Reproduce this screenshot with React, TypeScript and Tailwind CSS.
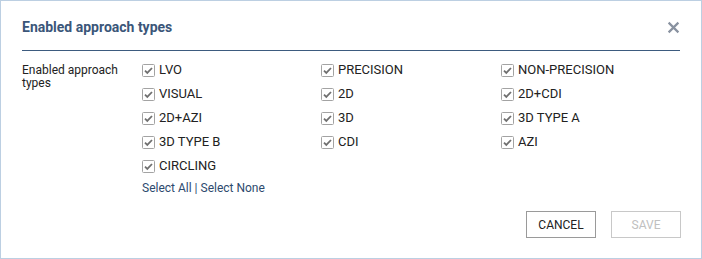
import React from 'react';

const TYPES = [
    'LVO', 'PRECISION', 'NON-PRECISION',
    'VISUAL', '2D', '2D+CDI',
    '2D+AZI', '3D', '3D TYPE A',
    '3D TYPE B', 'CDI', 'AZI',
    'CIRCLING',
];

const CheckBox: React.FC = () => (
    <svg width="13" height="13" viewBox="0 0 13 13" className="shrink-0">
        <rect x="0.5" y="0.5" width="12" height="12" rx="1" fill="#fff" stroke="#a3a3a3" />
        <path d="M3 6.6 L5.3 8.9 L10 4" fill="none" stroke="#707070" strokeWidth="1.8" />
    </svg>
);

export default function App() {
    return (
        <div
            className="w-[702px] h-[259px] bg-white border border-[#bccfe2] flex flex-col text-[#222]"
            style={{ fontFamily: 'Roboto, "Liberation Sans", sans-serif' }}
        >
            <div className="mx-[21px] pt-[16px] pb-[13px] flex items-center justify-between border-b-[1.5px] border-[#3d5b7f]">
                <h2 className="text-[14px] font-bold text-[#3b5679] leading-[20px]">Enabled approach types</h2>
                <svg width="13" height="13" viewBox="0 0 12 12">
                    <path d="M1.5 1.5 L10.5 10.5 M10.5 1.5 L1.5 10.5" stroke="#8992a0" strokeWidth="2" />
                </svg>
            </div>

            <div className="flex pl-[21px] pt-[7px]">
                <div className="w-[120px] shrink-0 text-[12px] leading-[13px] text-[#222] pt-[6px]">
                    Enabled approach
                    <br />
                    types
                </div>
                <div>
                    <div className="grid grid-cols-[179px_180px_180px]">
                        {TYPES.map((t) => (
                            <label key={t} className="flex items-center gap-[4px] h-[24px] text-[13px]">
                                <CheckBox />
                                <span>{t}</span>
                            </label>
                        ))}
                    </div>
                    <div className="text-[12px] text-[#2d4a6e] mt-[1px]">
                        <span>Select All</span> | <span>Select None</span>
                    </div>
                </div>
            </div>

            <div className="flex justify-end gap-[15px] pr-[20px] mt-auto mb-[20px]">
                <button className="w-[70px] h-[27px] border border-[#9a9a9a] text-[12px] text-[#222] bg-white">
                    CANCEL
                </button>
                <button className="w-[70px] h-[27px] border border-[#c8c8c8] text-[12px] text-[#c0c0c0] bg-white">
                    SAVE
                </button>
            </div>
        </div>
    );
}
